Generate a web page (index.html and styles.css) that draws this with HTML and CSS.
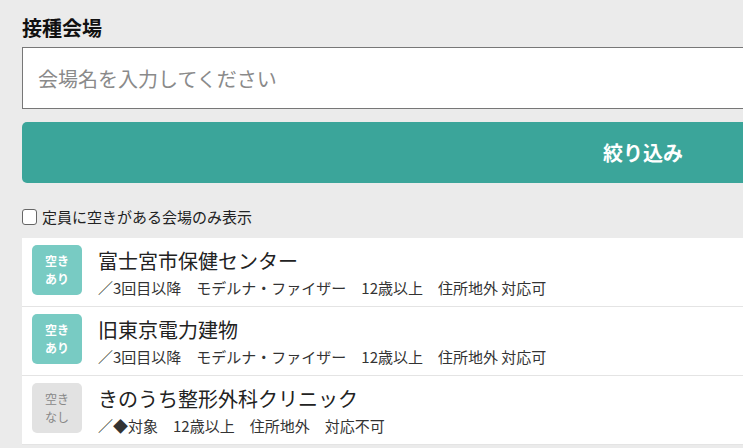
FILE: index.html
```html
<!doctype html>
<html>
<head>
    <meta charset="utf-8">
    <title>接種会場</title>
    <link rel="stylesheet" href="styles.css">
</head>
<body>
    <div class="search-box">
        <h3 class="label">接種会場</h3>
        <input class="venue-input" type="text" placeholder="会場名を入力してください">
        <button class="btn-filter">絞り込み</button>
        <label class="only-open">
            <input type="checkbox">
            <span>定員に空きがある会場のみ表示</span>
        </label>

        <ul class="venue-list">
            <li class="venue">
                <div class="badge open">空き<br>あり</div>
                <div class="info">
                    <p class="name">富士宮市保健センター</p>
                    <p class="detail">／3回目以降　モデルナ・ファイザー　12歳以上　住所地外 対応可</p>
                </div>
            </li>
            <li class="venue">
                <div class="badge open">空き<br>あり</div>
                <div class="info">
                    <p class="name">旧東京電力建物</p>
                    <p class="detail">／3回目以降　モデルナ・ファイザー　12歳以上　住所地外 対応可</p>
                </div>
            </li>
            <li class="venue">
                <div class="badge full">空き<br>なし</div>
                <div class="info">
                    <p class="name">きのうち整形外科クリニック</p>
                    <p class="detail">／◆対象　12歳以上　住所地外　対応不可</p>
                </div>
            </li>
        </ul>
    </div>
</body>
</html>
```

FILE: styles.css
```css
html, body {
    margin: 0;
    overflow: hidden;
    background: #ebebeb;
    font-family: "Noto Sans CJK JP", "Noto Sans", sans-serif;
    color: #222;
}

.search-box {
    width: 1242px;
    padding: 14px 0 0 22px;
}

.label {
    margin: 0 0 5px;
    font-size: 20px;
    line-height: 28px;
    font-weight: bold;
    color: #111;
}

.venue-input {
    display: block;
    box-sizing: border-box;
    width: 100%;
    height: 62px;
    margin: 0 0 13px;
    padding: 0 15px;
    border: 1px solid #777;
    background: #fff;
    font-family: inherit;
    font-size: 20px;
    outline: none;
}

.venue-input::placeholder {
    color: #8a8a8a;
}

.btn-filter {
    display: block;
    width: 100%;
    height: 61px;
    border: none;
    border-radius: 5px;
    background: #3ba59a;
    color: #fff;
    font-family: inherit;
    font-size: 20px;
    font-weight: bold;
}

.only-open {
    display: flex;
    align-items: center;
    gap: 5px;
    margin-top: 23px;
    font-size: 15px;
    line-height: 22px;
    color: #222;
}

.only-open input {
    appearance: none;
    -webkit-appearance: none;
    flex: none;
    width: 15px;
    height: 16px;
    margin: 0;
    border: 1px solid #666;
    border-radius: 3px;
    background: #fff;
}

.venue-list {
    list-style: none;
    margin: 10px 0 0;
    padding: 0;
}

.venue {
    display: flex;
    gap: 16px;
    padding: 7px 10px;
    background: #fff;
    border-bottom: 1px solid #e4e4e4;
}

.badge {
    flex: none;
    width: 50px;
    height: 50px;
    border-radius: 5px;
    display: flex;
    align-items: center;
    justify-content: center;
    text-align: center;
    font-size: 12px;
    line-height: 18px;
}

.badge.open {
    background: #78cbc3;
    color: #fff;
    font-weight: bold;
}

.badge.full {
    background: #e2e2e2;
    color: #888;
}

.info p {
    margin: 0;
}

.name {
    font-size: 20px;
    line-height: 31px;
    color: #222;
}

.detail {
    font-size: 15px;
    line-height: 23px;
    color: #333;
}
```
